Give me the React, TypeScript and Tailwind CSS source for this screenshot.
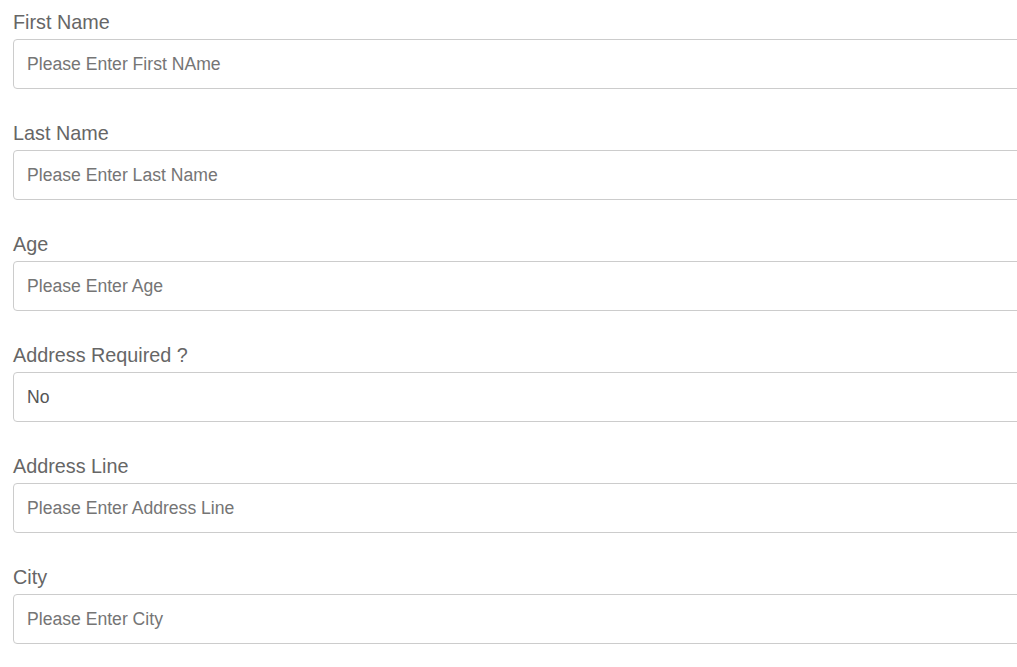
const FIELDS = [
  { label: "First Name", placeholder: "Please Enter First NAme" },
  { label: "Last Name", placeholder: "Please Enter Last Name" },
  { label: "Age", placeholder: "Please Enter Age" },
  { label: "Address Required ?", value: "No" },
  { label: "Address Line", placeholder: "Please Enter Address Line" },
  { label: "City", placeholder: "Please Enter City" },
];

export default function App() {
  return (
    <div className="w-screen h-screen overflow-hidden bg-white font-['Liberation_Sans',Arial,sans-serif]">
      <form className="w-[1120px] pl-[13px] pt-[8px]">
        {FIELDS.map((f) => (
          <div key={f.label} className="mb-[30px]">
            <label className="block text-[19.8px] leading-[28px] text-[#666666] mb-[3px]">
              {f.label}
            </label>
            {f.value ? (
              <div className="h-[50px] border border-[#cccccc] rounded-[4px] px-[13px] flex items-center text-[17.6px] text-[#555555]">
                {f.value}
              </div>
            ) : (
              <input
                type="text"
                placeholder={f.placeholder}
                className="block w-full h-[50px] border border-[#cccccc] rounded-[4px] px-[13px] text-[17.6px] text-[#555555] placeholder:text-[#757575] outline-none"
              />
            )}
          </div>
        ))}
      </form>
    </div>
  );
}
